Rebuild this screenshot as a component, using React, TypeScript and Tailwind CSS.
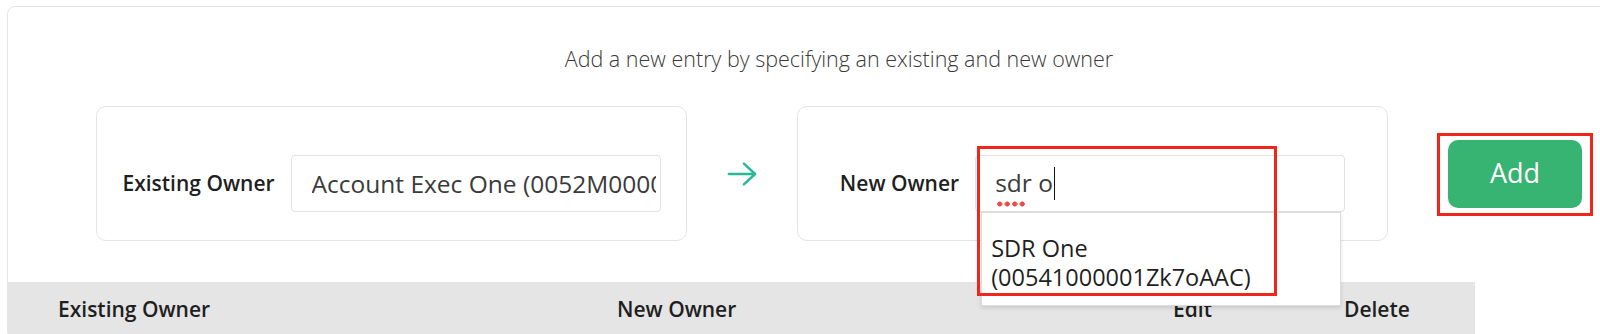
import { useState } from "react";

const font = "font-['Open_Sans','Noto_Sans',sans-serif]";

function OwnerCard({
  label,
  gap,
  children,
}: {
  label: string;
  gap: string;
  children: React.ReactNode;
}) {
  return (
    <div
      className={`flex w-[591px] h-[135px] items-start justify-center rounded-[10px] border border-[#e4e4e4] bg-white pt-[48px] ${gap}`}
    >
      <span className="flex h-[57px] items-center text-[21px] font-semibold text-[#1f1f1f]">
        {label}
      </span>
      {children}
    </div>
  );
}

export default function App() {
  const [existing] = useState("Account Exec One (0052M00000ABCdEAK)");

  return (
    <div className={`h-[334px] w-full overflow-hidden bg-white pl-[7px] pt-[6px] ${font}`}>
      <div className="w-[1664px] rounded-[8px] border border-[#e4e4e4] bg-white">
        <p className="pt-[40px] text-center text-[21.5px] font-light leading-[24px] text-[#3a3a3a]">
          Add a new entry by specifying an existing and new owner
        </p>

        <div className="mt-[35px] flex items-center justify-center">
          <OwnerCard label="Existing Owner" gap="gap-[16px]">
            <input
              readOnly
              value={existing}
              className="h-[57px] w-[370px] rounded-[4px] border border-[#e2e2e2] bg-white pl-[20px] pr-[4px] text-[24.5px] text-[#3b3b3b] outline-none"
            />
          </OwnerCard>

          <div className="mx-[40px] flex h-[30px] w-[30px] items-center justify-center">
            <svg width="32" height="26" viewBox="0 0 32 26" fill="none">
              <path
                d="M2 13H30M18 2L30 13L18 24"
                stroke="#27b998"
                strokeWidth="2.6"
                strokeLinecap="round"
                strokeLinejoin="round"
              />
            </svg>
          </div>

          <OwnerCard label="New Owner" gap="gap-[16px]">
            <div className="relative h-[57px] w-[370px]">
              <div className="flex h-[57px] w-full items-center rounded-[4px] border border-[#e2e2e2] bg-white pl-[19px] text-[24.5px] text-[#3b3b3b]">
                <span className="relative">
                  sdr
                  <span className="absolute bottom-[-5px] left-[1px] h-[6px] w-[30px] bg-[radial-gradient(circle,#ef4a44_2.3px,transparent_2.8px)] bg-[length:7.5px_6px] bg-repeat-x" />
                </span>
                <span className="whitespace-pre"> o</span>
                <span className="ml-[1px] inline-block h-[33px] w-[1.5px] bg-[#111]" />
              </div>

              <div className="absolute left-[6px] right-[4px] top-[57px] z-10 border border-[#dcdcdc] bg-white pb-[13px] pl-[9px] pr-[10px] pt-[21px] text-[23.5px] leading-[29px] text-[#1f1f1f] shadow-[0_2px_4px_rgba(0,0,0,0.12)]">
                SDR One (00541000001Zk7oAAC)
              </div>

              <div className="pointer-events-none absolute left-[2px] top-[-9px] z-20 h-[150px] w-[300px] border-[3px] border-[#f0261b]" />
            </div>
          </OwnerCard>

          <div className="relative ml-[60px]">
            <button className="flex h-[68px] w-[134px] items-center justify-center rounded-[10px] bg-[#37b372] text-[27px] text-white">
              Add
            </button>
            <div className="pointer-events-none absolute left-[-11px] top-[-7px] h-[83px] w-[156px] border-[3px] border-[#f0261b]" />
          </div>
        </div>

        <div className="mt-[41px] grid h-[56px] w-[1467px] grid-cols-[559px_556px_171px_1fr] items-center bg-[#e5e5e5] pl-[50px] text-[21px] font-semibold text-[#1f1f1f]">
          <span>Existing Owner</span>
          <span>New Owner</span>
          <span>Edit</span>
          <span>Delete</span>
        </div>
      </div>
    </div>
  );
}
